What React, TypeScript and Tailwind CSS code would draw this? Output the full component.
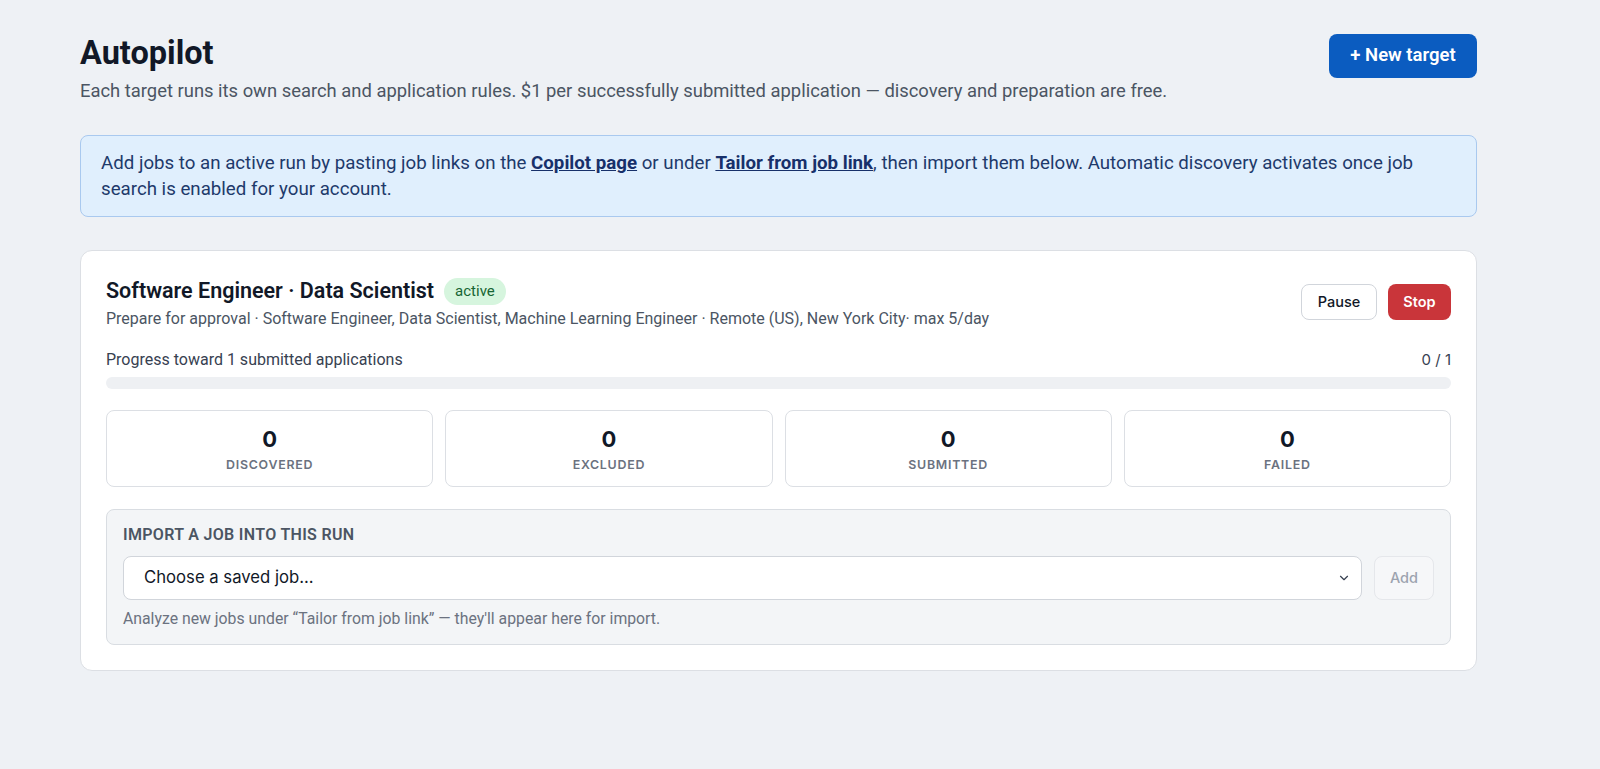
import { ChevronDown } from "lucide-react";

const stats = [
  { label: "Discovered", value: 0 },
  { label: "Excluded", value: 0 },
  { label: "Submitted", value: 0 },
  { label: "Failed", value: 0 },
];

const plex = "font-['Roboto','Noto_Sans',sans-serif]";
const ui = "font-['Inter','Liberation_Sans',sans-serif]";

export default function App() {
  return (
    <div className={`min-h-[769px] bg-[#eef1f5] text-[#111827] ${plex}`}>
      <div className="w-[1397px] ml-20 pt-[34px] pb-24">
        {/* header */}
        <div className="flex items-start justify-between">
          <div>
            <h1 className="text-[32.5px] font-bold leading-[38px]">Autopilot</h1>
            <p className="mt-[6px] text-[18.4px] leading-[26px] text-[#4b5563]">
              Each target runs its own search and application rules. $1 per successfully submitted application — discovery and preparation are free.
            </p>
          </div>
          <button className="h-11 w-[148px] rounded-lg bg-[#0b5cc0] text-white text-[18.5px] font-semibold">+ New target</button>
        </div>

        {/* info banner */}
        <p className="mt-[31px] rounded-lg border border-[#a9c9ef] bg-[#e0effd] px-5 py-[14px] text-[18.7px] leading-[26px] text-[#1e3a6b]">
          Add jobs to an active run by pasting job links on the <a className="font-bold underline text-[#17306a]">Copilot page</a> or under{" "}
          <a className="font-bold underline text-[#17306a]">Tailor from job link</a>, then import them below. Automatic discovery activates once job
          search is enabled for your account.
        </p>

        {/* target card */}
        <div className="mt-[33px] rounded-xl border border-[#dcdfe4] bg-white px-[25px] pt-[26px] pb-[25px]">
          <div className="flex items-start justify-between">
            <div>
              <div className="flex items-center gap-[10px] h-7">
                <h2 className="text-[21.5px] font-semibold leading-7">Software Engineer · Data Scientist</h2>
                <span className="rounded-full bg-[#d6f5de] px-[11px] leading-[27px] text-[15px] text-[#166534]">active</span>
              </div>
              <p className="mt-[3px] text-[16px] leading-[22px] text-[#4b5563]">
                Prepare for approval · Software Engineer, Data Scientist, Machine Learning Engineer · Remote (US), New York City· max 5/day
              </p>
            </div>
            <div className={`flex gap-[11px] mt-[7px] ${ui}`}>
              <button className="h-9 w-[76px] rounded-lg border border-[#d1d5db] bg-white text-[14.5px] font-medium text-[#111827]">Pause</button>
              <button className="h-9 w-[63px] rounded-lg bg-[#c9353a] text-[14.5px] font-semibold text-white">Stop</button>
            </div>
          </div>

          <div className="mt-[19px] flex items-center justify-between leading-[22px]">
            <span className="text-[16px] text-[#374151]">Progress toward 1 submitted applications</span>
            <span className={`${ui} text-[15px] text-[#374151]`}>0 / 1</span>
          </div>
          <div className="mt-[6px] h-3 rounded-full bg-[#eef0f3]" />

          <div className="mt-[21px] grid grid-cols-4 gap-3">
            {stats.map((s) => (
              <div key={s.label} className={`h-[77px] rounded-lg border border-[#dcdfe4] flex flex-col items-center justify-center ${ui}`}>
                <div className="text-[22px] font-bold leading-7 text-[#111827]">{s.value}</div>
                <div className="mt-[4px] text-[12.4px] leading-4 font-semibold uppercase tracking-[0.06em] text-[#6b7280]">{s.label}</div>
              </div>
            ))}
          </div>

          <div className="mt-[22px] rounded-lg border border-[#d9dde2] bg-[#f3f5f7] px-4 pt-[15px] pb-[15px]">
            <div className="text-[16px] leading-5 font-semibold uppercase tracking-[0.02em] text-[#4b5563]">Import a job into this run</div>
            <div className="mt-[11px] flex gap-3">
              <div className={`flex-1 h-11 rounded-lg border border-[#d1d5db] bg-white flex items-center justify-between pl-5 pr-[10px] ${ui}`}>
                <span className="text-[16.7px] text-[#111827]">Choose a saved job...</span>
                <ChevronDown size={14} strokeWidth={2} className="text-[#374151]" />
              </div>
              <button className={`h-11 w-[60px] rounded-lg border border-[#e5e7eb] bg-[#f6f7f9] text-[14.5px] font-medium text-[#9ca3af] ${ui}`}>Add</button>
            </div>
            <p className="mt-[9px] text-[15.8px] leading-5 text-[#6b7280]">Analyze new jobs under “Tailor from job link” — they'll appear here for import.</p>
          </div>
        </div>
      </div>
    </div>
  );
}
